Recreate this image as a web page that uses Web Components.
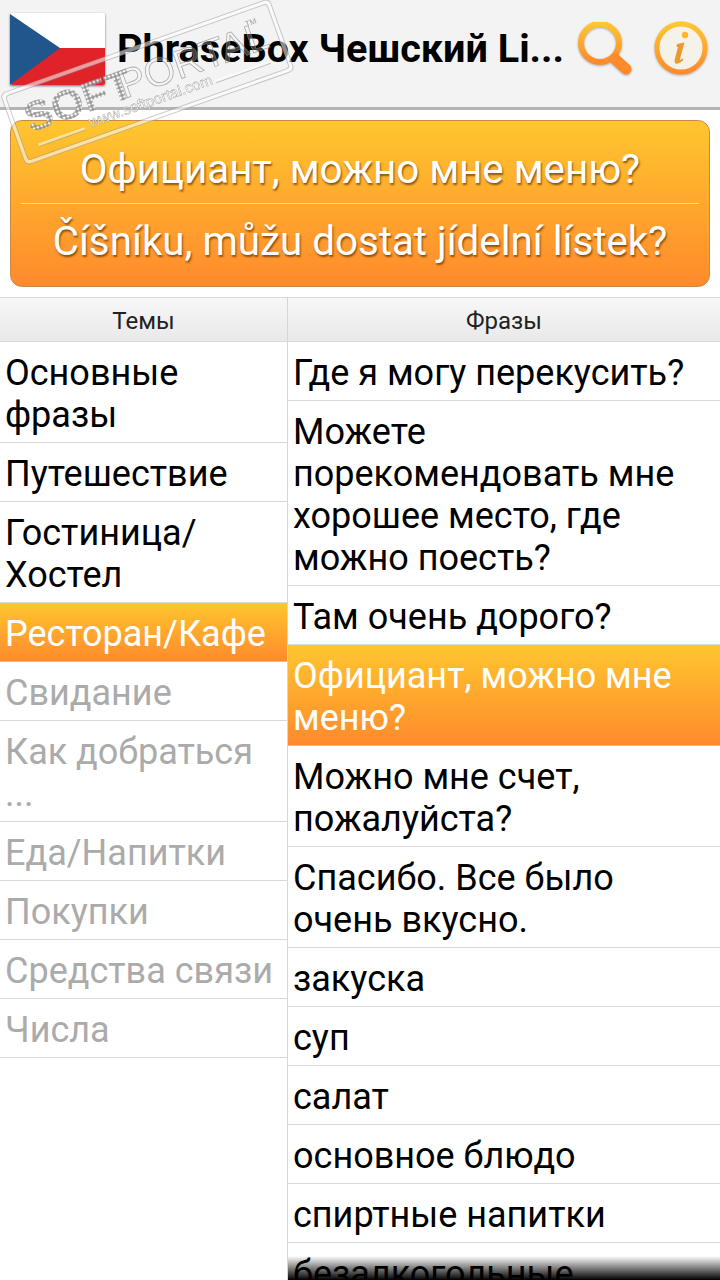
<!DOCTYPE html>
<html>
<head>
<meta charset="utf-8">
<title>PhraseBox</title>
<style>
  html, body { margin: 0; height: 1280px; overflow: hidden; background: #fff; }
  body { font-family: Roboto, "Liberation Sans", sans-serif; position: relative; }
  .lists { display: flex; height: 983px; }
</style>
</head>
<body>
<app-header title="PhraseBox Чешский Li..."></app-header>
<phrase-banner phrase="Официант, можно мне меню?" translation="Číšníku, můžu dostat jídelní lístek?"></phrase-banner>
<div class="lists">
  <list-pane heading="Темы" style="width:287px">
    <list-row>Основные<br>фразы</list-row>
    <list-row>Путешествие</list-row>
    <list-row>Гостиница/<br>Хостел</list-row>
    <list-row selected>Ресторан/Кафе</list-row>
    <list-row disabled>Свидание</list-row>
    <list-row disabled>Как добраться<br>...</list-row>
    <list-row disabled>Еда/Напитки</list-row>
    <list-row disabled>Покупки</list-row>
    <list-row disabled>Средства связи</list-row>
    <list-row disabled>Числа</list-row>
  </list-pane>
  <list-pane heading="Фразы" faded divided style="flex:1">
    <list-row>Где я могу перекусить?</list-row>
    <list-row>Можете<br>порекомендовать мне<br>хорошее место, где<br>можно поесть?</list-row>
    <list-row>Там очень дорого?</list-row>
    <list-row selected>Официант, можно мне<br>меню?</list-row>
    <list-row>Можно мне счет,<br>пожалуйста?</list-row>
    <list-row>Спасибо. Все было<br>очень вкусно.</list-row>
    <list-row>закуска</list-row>
    <list-row>суп</list-row>
    <list-row>салат</list-row>
    <list-row>основное блюдо</list-row>
    <list-row>спиртные напитки</list-row>
    <list-row>безалкогольные</list-row>
  </list-pane>
</div>
<soft-stamp></soft-stamp>

<script>
class AppHeader extends HTMLElement {
  constructor() {
    super();
    this.attachShadow({ mode: "open" });
  }

  connectedCallback() {
    this.shadowRoot.innerHTML = `
      <style>
        :host {
          display: flex;
          align-items: center;
          box-sizing: border-box;
          height: 110px;
          padding: 0 12px 6px 10px;
          background: #f3f3f3;
          border-bottom: 3px solid #b4b4b4;
        }
        .flag { flex: none; display: block; margin: 0 12px 3px 0; filter: drop-shadow(0 1px 1px rgba(0,0,0,.55)); }
        h1 {
          flex: 1;
          margin: 0 0 5px;
          font-size: 39.6px;
          font-weight: 700;
          color: #000;
          white-space: nowrap;
        }
        .icon { flex: none; display: block; filter: drop-shadow(0 1px 1px rgba(0,0,0,.3)); }
        .search { margin: 0 21px 0 0; }
        .info { margin-bottom: 5px; }
      </style>
      <svg class="flag" width="95" height="72" viewBox="0 0 95 72">
        <rect width="95" height="72" rx="2" fill="#fff"/>
        <path d="M0 35H95V70Q95 72 93 72H2L0 70Z" fill="#df2328"/>
        <path d="M0 1L50 35L0 72Z" fill="#20568c"/>
      </svg>
      <h1>${this.getAttribute("title")}</h1>
      <svg class="icon search" width="56" height="58" viewBox="0 0 56 58">
        <defs><linearGradient id="g" x1="0" y1="0" x2="0" y2="1"><stop offset="0" stop-color="#ffc62f"/><stop offset="1" stop-color="#ff8a2c"/></linearGradient></defs>
        <circle cx="23" cy="21" r="19" fill="none" stroke="url(#g)" stroke-width="6"/>
        <path d="M38 37L49 47" stroke="#ff8a2c" stroke-width="11" stroke-linecap="round"/>
      </svg>
      <svg class="icon info" width="54" height="54" viewBox="0 0 54 54">
        <defs><linearGradient id="h" x1="0" y1="0" x2="0" y2="1"><stop offset="0" stop-color="#ffc62f"/><stop offset="1" stop-color="#ff8a2c"/></linearGradient></defs>
        <circle cx="27" cy="27" r="24" fill="#f5f2ea" stroke="url(#h)" stroke-width="5"/>
        <circle cx="31" cy="14" r="3.2" fill="#ffb52e"/>
        <path d="M23 23L30.500 21.500L26 38Q25.500 40 28.500 37.500L29.500 39Q24.500 43.500 21.500 42.500Q20 41.500 20.800 38L24 26L22.500 26Z" fill="#ec9a30"/>
      </svg>
    `;
  }
}

class PhraseBanner extends HTMLElement {
  constructor() {
    super();
    this.attachShadow({ mode: "open" });
  }

  connectedCallback() {
    this.shadowRoot.innerHTML = `
      <style>
        :host { display: block; padding: 10px 10px 10px; }
        .box {
          box-sizing: border-box;
          height: 167px;
          padding: 14px 10px 8px;
          border: 1px solid #c98a47;
          border-radius: 12px;
          background: linear-gradient(#ffc62f, #ff8a2c);
          color: #fff;
          text-shadow: 1px 2px 2px rgba(90,45,0,.7);
          font-size: 40.3px;
          text-align: center;
          display: flex;
          flex-direction: column;
        }
        .line { flex: 1; display: flex; align-items: center; justify-content: center; white-space: nowrap; }
        .line:first-child { flex: none; height: 68px; }
        .line + .line { border-top: 1px solid #ffdc8a; }
      </style>
      <div class="box">
        <div class="line">${this.getAttribute("phrase")}</div>
        <div class="line">${this.getAttribute("translation")}</div>
      </div>
    `;
  }
}

class ListPane extends HTMLElement {
  constructor() {
    super();
    this.attachShadow({ mode: "open" });
  }

  connectedCallback() {
    const fade = this.hasAttribute("faded") ? '<div class="fade"></div>' : "";
    this.shadowRoot.innerHTML = `
      <style>
        :host {
          display: block;
          position: relative;
          overflow: hidden;
          color: #000;
        }
        :host([divided]) { border-left: 1px solid #d6d6d6; }
        .head {
          height: 43px;
          line-height: 46px;
          border-top: 1px solid #d9d9d9;
          border-bottom: 1px solid #d9d9d9;
          background: linear-gradient(#f7f7f7, #e9e9e9);
          font-size: 24px;
          color: #222;
          text-align: center;
        }
        .fade {
          position: absolute;
          left: 0; right: 0; bottom: 0;
          height: 24px;
          background: linear-gradient(rgba(0,0,0,0), #000);
        }
      </style>
      <div class="head">${this.getAttribute("heading")}</div>
      <slot></slot>
      ${fade}
    `;
  }
}

class ListRow extends HTMLElement {
  constructor() {
    super();
    this.attachShadow({ mode: "open" });
    this.shadowRoot.innerHTML = `
      <style>
        :host {
          display: block;
          padding: 10px 5px 6px;
          border-bottom: 1px solid #d9d9d9;
          font-size: 36px;
          line-height: 42px;
          white-space: nowrap;
        }
        :host([selected]) {
          color: #fff;
          background: linear-gradient(#ffc62f, #ff8a2c);
          border-bottom-color: transparent;
        }
        :host([disabled]) { color: #ababab; }
      </style>
      <slot></slot>
    `;
  }
}

class SoftStamp extends HTMLElement {
  constructor() {
    super();
    this.attachShadow({ mode: "open" });
    this.shadowRoot.innerHTML = `
      <style>
        :host { position: absolute; left: 0; top: 0; pointer-events: none; }
        svg { display: block; }
        text { font-family: "Liberation Sans", sans-serif; }
      </style>
      <svg width="300" height="175" viewBox="0 0 300 175">
        <defs>
          <pattern id="dots" width="4" height="4" patternUnits="userSpaceOnUse">
            <rect width="4" height="4" fill="#7a7a7a"/>
            <rect x=".7" y=".7" width="2.600" height="2.600" fill="#fff"/>
          </pattern>
        </defs>
        <g transform="translate(3 95) rotate(-19.500)" fill="none">
          <rect width="281" height="72" rx="4" stroke="#fff" stroke-width="4" opacity=".55"/>
          <rect x="-2" y="-2" width="285" height="76" rx="5" stroke="#8c8c8c" stroke-width="1" opacity=".45"/>
          <rect x="2" y="2" width="277" height="68" rx="3" stroke="#8c8c8c" stroke-width="1" opacity=".45"/>
          <text x="13" y="45" font-size="42" font-weight="900" fill="url(#dots)" opacity=".85">SOFT</text>
          <text x="113" y="44" font-size="40" fill="#fff" fill-opacity=".35" stroke="#8c8c8c" stroke-width=".8" opacity=".7">PORTAL</text>
          <text x="72" y="60" font-size="15" fill="#fff" stroke="#8c8c8c" stroke-width=".4" opacity=".85">www.softportal.com</text>
          <path d="M17 59H66M205 58H263" stroke="#fff" stroke-width="3" opacity=".55"/>
          <path d="M17 60.500H66M205 59.500H263" stroke="#8c8c8c" stroke-width="1" opacity=".5"/>
          <text x="252" y="17" font-size="8" fill="#8c8c8c" opacity=".8">TM</text>
        </g>
      </svg>
    `;
  }
}

customElements.define("app-header", AppHeader);
customElements.define("phrase-banner", PhraseBanner);
customElements.define("list-pane", ListPane);
customElements.define("list-row", ListRow);
customElements.define("soft-stamp", SoftStamp);
</script>
</body>
</html>
